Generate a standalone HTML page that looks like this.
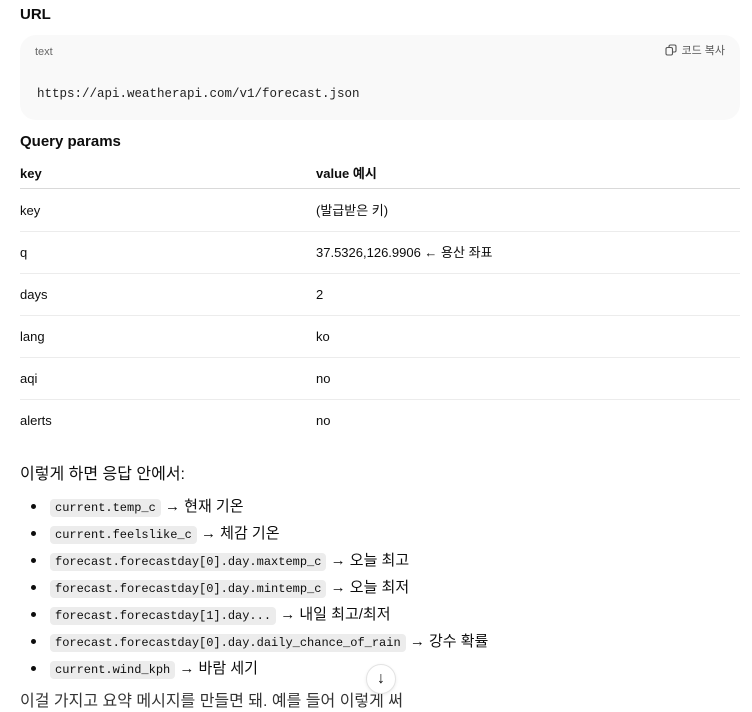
<!DOCTYPE html>
<html><head><meta charset="utf-8"><style>
body{margin:0;width:752px;height:696px;overflow:hidden;background:#fff;font-family:"Liberation Sans","Noto Sans CJK KR",sans-serif;color:#0d0d0d;position:relative}
.a{position:absolute;white-space:nowrap;line-height:18px}
h3{position:absolute;margin:0;font-size:15px;font-weight:bold;left:20px;line-height:18px}
.code{position:absolute;left:20px;top:35px;width:720px;height:85px;background:#f9f9f9;border-radius:16px}
.mono{font-family:"Liberation Mono",monospace}
.row{position:absolute;left:20px;width:720px;height:42px;border-bottom:1px solid #ececec;font-size:13px}
.row span{position:absolute;top:13px;line-height:18px;white-space:nowrap}
.li{position:absolute;left:31px;font-size:15px;white-space:nowrap;line-height:20px}
.li i{display:inline-block;width:5px;height:5px;background:#0d0d0d;border-radius:50%;vertical-align:middle;margin-right:14px;position:relative;top:-1px}
.li code{font-family:"Liberation Mono",monospace;font-size:12px;background:#ececec;border-radius:4px;padding:2px 5px}
</style></head><body>
<h3 style="top:6px">URL</h3>
<div class="code">
<div class="a" style="left:15px;top:8px;font-size:11px;color:#666">text</div>
<div class="a" style="right:15px;top:7px;font-size:11px;color:#555"><svg width="12" height="12" viewBox="0 0 12 12" style="vertical-align:-2px;margin-right:4px"><rect x="1" y="3.5" width="6.5" height="7.5" rx="1.5" fill="none" stroke="#555" stroke-width="1.1"/><path d="M4 3.5V2.5a1.5 1.5 0 0 1 1.5-1.5h4a1.5 1.5 0 0 1 1.5 1.5v4a1.5 1.5 0 0 1-1.5 1.5H7.5" fill="none" stroke="#555" stroke-width="1.1"/></svg>코드 복사</div>
<div class="a mono" style="left:17px;top:50px;font-size:12.5px;color:#222">https://api.weatherapi.com/v1/forecast.json</div>
</div>
<h3 style="top:133px">Query params</h3>
<div class="row" style="top:146px;height:42px;border-bottom:1px solid #d9d9d9;font-weight:bold"><span style="left:0;top:19px">key</span><span style="left:296px;top:19px">value 예시</span></div>
<div class="row" style="top:189px"><span style="left:0">key</span><span style="left:296px">(발급받은 키)</span></div>
<div class="row" style="top:231px"><span style="left:0">q</span><span style="left:296px">37.5326,126.9906 ← 용산 좌표</span></div>
<div class="row" style="top:273px"><span style="left:0">days</span><span style="left:296px">2</span></div>
<div class="row" style="top:315px"><span style="left:0">lang</span><span style="left:296px">ko</span></div>
<div class="row" style="top:357px"><span style="left:0">aqi</span><span style="left:296px">no</span></div>
<div class="row" style="top:399px;border-bottom:none"><span style="left:0">alerts</span><span style="left:296px">no</span></div>
<div class="a" style="left:20px;top:465px;font-size:16px;line-height:20px">이렇게 하면 응답 안에서:</div>
<div class="li" style="top:497px"><i></i><code>current.temp_c</code> → 현재 기온</div>
<div class="li" style="top:524px"><i></i><code>current.feelslike_c</code> → 체감 기온</div>
<div class="li" style="top:551px"><i></i><code>forecast.forecastday[0].day.maxtemp_c</code> → 오늘 최고</div>
<div class="li" style="top:578px"><i></i><code>forecast.forecastday[0].day.mintemp_c</code> → 오늘 최저</div>
<div class="li" style="top:605px"><i></i><code>forecast.forecastday[1].day...</code> → 내일 최고/최저</div>
<div class="li" style="top:632px"><i></i><code>forecast.forecastday[0].day.daily_chance_of_rain</code> → 강수 확률</div>
<div class="li" style="top:659px"><i></i><code>current.wind_kph</code> → 바람 세기</div>
<div class="a" style="left:20px;top:692px;font-size:16px;line-height:20px;color:#333">이걸 가지고 요약 메시지를 만들면 돼. 예를 들어 이렇게 써</div>
<div class="a" style="left:366px;top:664px;width:28px;height:28px;border-radius:50%;background:#fff;border:1px solid #e3e3e3;box-shadow:0 1px 3px rgba(0,0,0,.08);text-align:center;line-height:28px;font-size:16px">↓</div>
</body></html>
